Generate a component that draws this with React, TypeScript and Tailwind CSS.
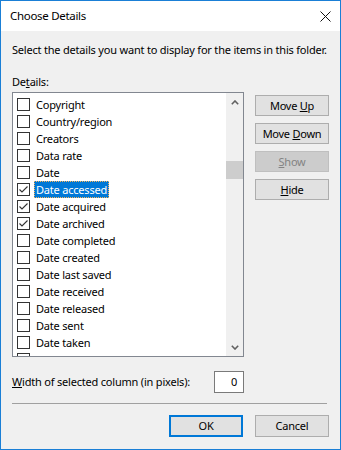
import React from 'react'

const items = [
  { label: 'Copyright', checked: false },
  { label: 'Country/region', checked: false },
  { label: 'Creators', checked: false },
  { label: 'Data rate', checked: false },
  { label: 'Date', checked: false },
  { label: 'Date accessed', checked: true, selected: true },
  { label: 'Date acquired', checked: true },
  { label: 'Date archived', checked: true },
  { label: 'Date completed', checked: false },
  { label: 'Date created', checked: false },
  { label: 'Date last saved', checked: false },
  { label: 'Date received', checked: false },
  { label: 'Date released', checked: false },
  { label: 'Date sent', checked: false },
  { label: 'Date taken', checked: false },
  { label: 'Date visited', checked: false },
]

const CheckBox = ({ checked }: { checked: boolean }) => (
  <span className="w-[13px] h-[13px] shrink-0 border border-[#333333] bg-white flex items-center justify-center">
    {checked && (
      <svg width="11" height="11" viewBox="0 0 11 11">
        <path d="M1.5 5.5 L4 8 L9.5 2.5" fill="none" stroke="#333333" strokeWidth="1.1" />
      </svg>
    )}
  </span>
)

const Chevron = ({ down }: { down?: boolean }) => (
  <svg width="8" height="5" viewBox="0 0 8 5">
    <path
      d={down ? 'M0.8 0.8 L4 4 L7.2 0.8' : 'M0.8 4.2 L4 1 L7.2 4.2'}
      fill="none"
      stroke="#606060"
      strokeWidth="1.6"
    />
  </svg>
)

const SideButton = ({ children, disabled }: { children: React.ReactNode; disabled?: boolean }) => (
  <button
    className={`w-[74px] h-[21px] border text-[11px] tracking-[-0.25px] leading-none whitespace-nowrap ${
      disabled ? 'bg-[#cccccc] border-[#bfbfbf] text-[#838383]' : 'bg-[#e1e1e1] border-[#adadad] text-black'
    }`}
  >
    {children}
  </button>
)

export default function App() {
  return (
    <div
      className="w-[341px] h-[450px] border border-[#1a7fd6] bg-[#f0f0f0] flex flex-col text-black text-[11px] tracking-[-0.2px] whitespace-nowrap"
      style={{ fontFamily: '"Noto Sans", "Open Sans", sans-serif' }}
    >
      {/* title bar */}
      <div className="h-[30px] bg-white flex items-center justify-between pl-[9px] pr-[9px] shrink-0">
        <span className="text-[11.5px] tracking-[-0.3px]">Choose Details</span>
        <svg width="11" height="11" viewBox="0 0 11 11">
          <path d="M0.5 0.5 L10.5 10.5 M10.5 0.5 L0.5 10.5" stroke="#111" strokeWidth="1" />
        </svg>
      </div>

      <div className="flex flex-col px-[11px]">
        <p className="mt-[11px] leading-[16px]">Select the details you want to display for the items in this folder.</p>
        <p className="mt-[16px] leading-[16px]">
          De<span className="underline">t</span>ails:
        </p>

        <div className="mt-[2px] flex">
          {/* list box */}
          <div className="w-[233px] h-[265px] border border-[#828790] bg-white flex overflow-hidden">
            <div className="flex-1 pt-[3px] pl-[4px] overflow-hidden">
              {items.map((it) => (
                <div key={it.label} className="h-[17px] flex items-center">
                  <CheckBox checked={it.checked} />
                  <span
                    className={`ml-[4px] px-[1px] h-[17px] flex items-center leading-none ${
                      it.selected ? 'bg-[#0078d7] text-white border border-dotted border-[#f7b55c]' : 'border border-transparent'
                    }`}
                  >
                    {it.label}
                  </span>
                </div>
              ))}
            </div>
            {/* scrollbar */}
            <div className="w-[17px] bg-[#f0f0f0] flex flex-col items-center">
              <div className="h-[17px] w-full flex items-center justify-center mt-[1px]">
                <Chevron />
              </div>
              <div className="mt-[50px] w-full h-[18px] bg-[#cdcdcd]" />
              <div className="flex-1" />
              <div className="h-[17px] w-full flex items-center justify-center">
                <Chevron down />
              </div>
            </div>
          </div>

          {/* side buttons */}
          <div className="ml-[11px] mt-[3px] flex flex-col gap-[7px]">
            <SideButton>
              Move <span className="underline">U</span>p
            </SideButton>
            <SideButton>
              Move <span className="underline">D</span>own
            </SideButton>
            <SideButton disabled>
              <span className="underline">S</span>how
            </SideButton>
            <SideButton>
              <span className="underline">H</span>ide
            </SideButton>
          </div>
        </div>

        {/* width row */}
        <div className="mt-[14px] flex items-center">
          <span className="w-[202px]">
            <span className="underline">W</span>idth of selected column (in pixels):
          </span>
          <div className="w-[30px] h-[22px] border border-[#7a7a7a] bg-white flex items-center justify-end pr-[6px]">
            0
          </div>
        </div>

        <div className="mt-[10px] mr-[2px] border-t border-[#a0a0a0]" />

        <div className="mt-[11px] flex justify-end gap-[12px]">
          <button className="w-[74px] h-[22px] border-2 border-[#0078d7] bg-[#e1e1e1] text-[11px]">OK</button>
          <button className="w-[74px] h-[22px] border border-[#adadad] bg-[#e1e1e1] text-[11px]">Cancel</button>
        </div>
      </div>
    </div>
  )
}
